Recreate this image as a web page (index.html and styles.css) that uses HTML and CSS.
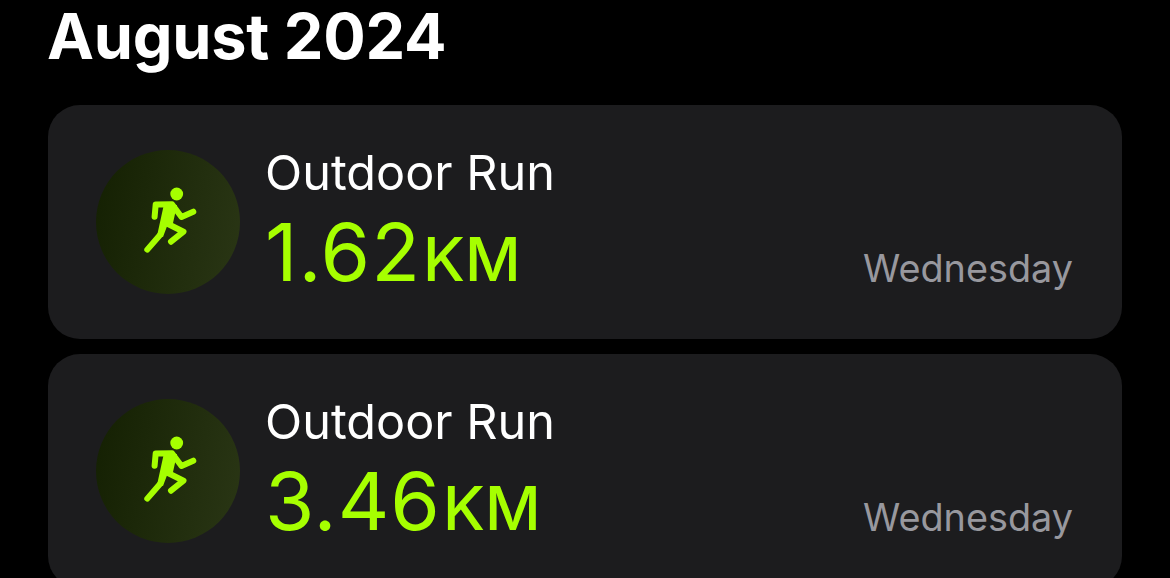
FILE: index.html
```html
<!DOCTYPE html>
<html lang="en">
<head>
    <meta charset="UTF-8">
    <meta name="viewport" content="width=device-width, initial-scale=1.0">
    <title>Workouts</title>
    <link rel="stylesheet" href="styles.css">
</head>
<body>
    <div class="container">
        <h1 class="month">August 2024</h1>
        <div class="card">
            <div class="icon-circle">
                <svg class="run-icon" viewBox="0 0 144 144">
                    <circle class="fill" cx="80.7" cy="44" r="6.4"/>
                    <path class="thin" d="M58.6 66.7 L59.7 54.6 L76 54.2 L85.5 67 L97.3 61.7"/>
                    <path class="fill" d="M68 54 L81 55 L77 73 L71.5 75 L67 87 L61 86 Z"/>
                    <path class="thin" d="M64 85 L51.3 99.6"/>
                    <path class="thin" d="M71 73.5 L87.5 81.7 L75 91.7"/>
                </svg>
            </div>
            <div class="info">
                <div class="type">Outdoor Run</div>
                <div class="distance">1.62<span class="unit">KM</span></div>
            </div>
            <div class="day">Wednesday</div>
        </div>
        <div class="card">
            <div class="icon-circle">
                <svg class="run-icon" viewBox="0 0 144 144">
                    <circle class="fill" cx="80.7" cy="44" r="6.4"/>
                    <path class="thin" d="M58.6 66.7 L59.7 54.6 L76 54.2 L85.5 67 L97.3 61.7"/>
                    <path class="fill" d="M68 54 L81 55 L77 73 L71.5 75 L67 87 L61 86 Z"/>
                    <path class="thin" d="M64 85 L51.3 99.6"/>
                    <path class="thin" d="M71 73.5 L87.5 81.7 L75 91.7"/>
                </svg>
            </div>
            <div class="info">
                <div class="type">Outdoor Run</div>
                <div class="distance">3.46<span class="unit">KM</span></div>
            </div>
            <div class="day">Wednesday</div>
        </div>
    </div>
</body>
</html>
```
FILE: styles.css
```css
html, body {
    margin: 0;
    padding: 0;
    height: 100%;
    overflow: hidden;
    background-color: #000;
}
body {
    font-family: Inter, "Liberation Sans", sans-serif;
    color: #fff;
}
.container {
    padding: 0 48px;
}
.month {
    margin: 0 0 30px -1px;
    height: 75px;
    font-size: 63px;
    line-height: 73px;
    font-weight: 700;
    letter-spacing: -0.25px;
}
.card {
    display: flex;
    align-items: center;
    height: 234px;
    margin-bottom: 15px;
    padding: 0 49px 0 48px;
    box-sizing: border-box;
    background-color: #1c1c1e;
    border-radius: 32px;
}
.icon-circle {
    width: 144px;
    height: 144px;
    flex-shrink: 0;
    border-radius: 50%;
    background: linear-gradient(100deg, #142002, #2a3615);
}
.run-icon {
    display: block;
    width: 144px;
    height: 144px;
}
.fill {
    fill: #a6ff00;
}
.thin {
    fill: none;
    stroke: #a6ff00;
    stroke-width: 6px;
    stroke-linecap: round;
    stroke-linejoin: round;
}
.info {
    margin-left: 25px;
    padding-top: 5px;
    flex: 1;
}
.type {
    font-size: 48.6px;
    line-height: 58px;
    font-weight: 400;
}
.distance {
    margin-top: 4px;
    font-size: 80px;
    line-height: 92px;
    font-weight: 400;
    letter-spacing: 1px;
    color: #a6ff00;
}
.unit {
    margin-left: 2px;
    font-size: 61px;
    font-weight: 500;
    letter-spacing: 0;
}
.day {
    align-self: flex-end;
    margin-bottom: 49px;
    font-size: 37.8px;
    line-height: 44px;
    color: #98989e;
}
```
